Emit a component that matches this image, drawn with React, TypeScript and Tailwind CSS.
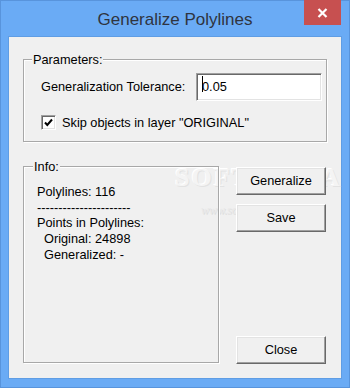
import React from "react";

const btn =
  "relative w-[90px] h-[28px] bg-[#f0f0f0] border border-t-white border-l-white border-r-[#696969] border-b-[#696969] shadow-[inset_-1px_-1px_0_#a0a0a0,inset_1px_1px_0_#e3e3e3] flex items-center justify-center text-[12.75px] text-black";

const group =
  "relative border border-[#a8a8a8] shadow-[1px_1px_0_#ffffff,inset_1px_1px_0_#ffffff]";

export default function App() {
  return (
    <div className="w-[350px] h-[388px] bg-[#6aabf5] border border-[#5894dc] flex flex-col font-['Liberation_Sans',Arial,sans-serif]">
      {/* Title bar */}
      <div className="h-[36px] grid grid-cols-[1fr_auto_1fr] items-center">
        <div />
        <div className="text-[17px] text-[#2f3440] leading-none pt-[1px]">
          Generalize Polylines
        </div>
        <div className="flex justify-end self-start mr-[8px] -mt-px">
          <div className="w-[37px] h-[25px] bg-[#c75050] flex items-center justify-center">
            <svg width="11" height="10" viewBox="0 0 11 10">
              <path d="M1.5 1 L9.5 9 M9.5 1 L1.5 9" stroke="#ffffff" strokeWidth="2.2" />
            </svg>
          </div>
        </div>
      </div>

      {/* Client area */}
      <div className="relative mx-[8px] h-[341px] bg-[#f0f0f0] shadow-[0_0_0_1px_#5f9de4] flex flex-col pt-[22px] pl-[14px] text-[12.75px] text-black">
        {/* Watermark (behind the controls) */}
        <div className="absolute left-[166px] top-[128px] pointer-events-none flex flex-col items-start">
          <span className="font-['Liberation_Serif',serif] font-bold text-[26px] tracking-[2px] leading-none text-[#f4f4f4] [text-shadow:1px_1px_0_#e2e2e2,-1px_-1px_0_#ffffff]">
            SOFTPEDIA
          </span>
          <span className="ml-[26px] mt-[13px] font-['Liberation_Serif',serif] italic text-[12px] leading-none text-[#e8e8e8] [text-shadow:1px_1px_0_#dedede]">
            www.softpedia.com
          </span>
        </div>

        {/* Parameters group */}
        <div className={`${group} w-[304px] h-[83px] flex flex-col pl-[17px] pr-[4px] pt-[13px]`}>
          <span className="absolute left-[8px] -top-[8px] bg-[#f0f0f0] px-[1px] leading-[15px]">
            Parameters:
          </span>
          <div className="flex items-center">
            <span>Generalization Tolerance:</span>
            <div className="ml-auto w-[126px] h-[28px] bg-white border border-t-[#a0a0a0] border-l-[#a0a0a0] border-r-white border-b-white shadow-[inset_1px_1px_0_#696969,inset_-1px_-1px_0_#e3e3e3] flex items-center pl-[5px] relative">
              <span className="relative">
                <span className="absolute left-0 top-[-1px] w-px h-[16px] bg-black" />
                0.05
              </span>
            </div>
          </div>
          <div className="flex items-center mt-[12px]">
            <div className="w-[15px] h-[15px] bg-white border border-t-[#a0a0a0] border-l-[#a0a0a0] border-r-white border-b-white shadow-[inset_1px_1px_0_#696969,inset_-1px_-1px_0_#e3e3e3] flex items-center justify-center">
              <svg width="11" height="11" viewBox="0 0 11 11">
                <polyline points="2,5.5 4.3,8 9,2.5" fill="none" stroke="#000" strokeWidth="2" />
              </svg>
            </div>
            <span className="ml-[6px]">Skip objects in layer "ORIGINAL"</span>
          </div>
        </div>

        {/* Lower row */}
        <div className="relative flex mt-[24px]">
          <div className={`${group} w-[196px] h-[197px] pl-[13px] pt-[17px] leading-[15.7px]`}>
            <span className="absolute left-[9px] -top-[8px] bg-[#f0f0f0] px-[1px] leading-[15px]">
              Info:
            </span>
            <div>Polylines: 116</div>
            <div>----------------------</div>
            <div>Points in Polylines:</div>
            <div className="pl-[7px]">Original: 24898</div>
            <div className="pl-[7px]">Generalized: -</div>
          </div>
          <div className="ml-[17px] flex flex-col pt-[1px] h-[198px]">
            <div className={btn}>Generalize</div>
            <div className={`${btn} mt-[9px]`}>Save</div>
            <div className={`${btn} mt-auto`}>Close</div>
          </div>
        </div>
      </div>
    </div>
  );
}
